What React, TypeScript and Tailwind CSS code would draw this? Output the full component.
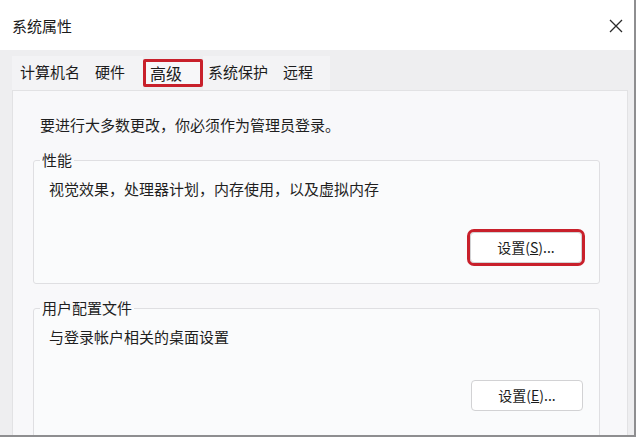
const tabs = [
    { name: "计算机名", w: "w-[75px]", pl: "pl-[8px]" },
    { name: "硬件", w: "w-[56px]", pl: "pl-[8px]" },
    { name: "高级", w: "w-[60px]", pl: "pl-[7px]", active: true },
    { name: "系统保护", w: "w-[74px]", pl: "pl-[5px]" },
    { name: "远程", w: "w-[53px]", pl: "pl-[6px]" },
]

function SettingsButton({ label, hotkey, marked }: { label: string; hotkey: string; marked?: boolean }) {
    return (
        <button
            className={
                "w-[112px] h-[31px] rounded-[4px] bg-white border border-[#d2d2d4] text-[14px] text-[#1b1b1b] " +
                (marked ? "outline-[3px] outline-solid outline-[#c8202b] rounded-[3px]" : "")
            }
        >
            {label}(<span className="underline">{hotkey}</span>)...
        </button>
    )
}

function GroupBox({
    title,
    desc,
    children,
    className,
}: {
    title: string
    desc: string
    children: React.ReactNode
    className?: string
}) {
    return (
        <fieldset
            className={
                "mx-[20px] mr-[27px] border border-[#dfdfe2] rounded-[3px] bg-[#fafbfc] shrink-0 " +
                (className ?? "")
            }
        >
            <legend className="ml-[6px] px-[2px] text-[15px] leading-[20px] text-[#1f1f1f]">{title}</legend>
            <div className="pl-[15px] pt-[8px] text-[15px] leading-[22px] text-[#1f1f1f]">{desc}</div>
            {children}
        </fieldset>
    )
}

export default function App() {
    return (
        <div className="w-[640px] h-[440px] bg-white overflow-hidden font-['Noto_Sans_CJK_SC','Noto_Sans',sans-serif]">
            <div className="w-[636px] h-[437px] border-r-2 border-b-2 border-[#8e8e90] flex flex-col overflow-hidden">
                <div className="h-[50px] shrink-0 bg-white flex items-center justify-between pl-[12px] pr-[10px]">
                    <span className="text-[15px] text-[#1a1a1a] pt-[2px]">系统属性</span>
                    <svg width="14" height="14" viewBox="0 0 14 14" className="mr-[1px] mt-[2px]">
                        <path d="M1 1 L13 13 M13 1 L1 13" stroke="#2a2a2a" strokeWidth="1.3" />
                    </svg>
                </div>
                <div className="flex-1 bg-[#eeeef0] pl-[12px] pr-[6px] flex flex-col">
                    <div className="flex h-[40px] pt-[6px] shrink-0">
                        {tabs.map((t) => (
                            <div
                                key={t.name}
                                className={
                                    "h-full flex items-center text-[15px] text-[#1c1c1c] " +
                                    t.w +
                                    " " +
                                    (t.active
                                        ? "pl-[0px] pt-[3px] pb-[3px] bg-[#eeeef0]"
                                        : t.pl + " bg-[#f3f3f5] pb-[2px]")
                                }
                            >
                                {t.active ? (
                                    <div className="w-full h-full border-[3px] border-[#c8202b] rounded-[2px] bg-[#f7f7f9] flex items-center pl-[4px] text-[16px]">
                                        {t.name}
                                    </div>
                                ) : (
                                    t.name
                                )}
                            </div>
                        ))}
                    </div>
                    <div className="flex-1 bg-[#f8f8fa] border border-[#e2e2e4] border-b-0 flex flex-col">
                        <p className="pl-[27px] pt-[23px] text-[15px] leading-[22px] text-[#1f1f1f]">
                            要进行大多数更改，你必须作为管理员登录。
                        </p>
                        <GroupBox title="性能" desc="视觉效果，处理器计划，内存使用，以及虚拟内存" className="mt-[14px] h-[134px]">
                            <div className="flex justify-end pr-[17px] mt-[32px]">
                                <SettingsButton label="设置" hotkey="S" marked />
                            </div>
                        </GroupBox>
                        <GroupBox title="用户配置文件" desc="与登录帐户相关的桌面设置" className="mt-[14px] h-[150px]">
                            <div className="flex justify-end pr-[16px] mt-[32px]">
                                <SettingsButton label="设置" hotkey="E" />
                            </div>
                        </GroupBox>
                    </div>
                </div>
            </div>
        </div>
    )
}
